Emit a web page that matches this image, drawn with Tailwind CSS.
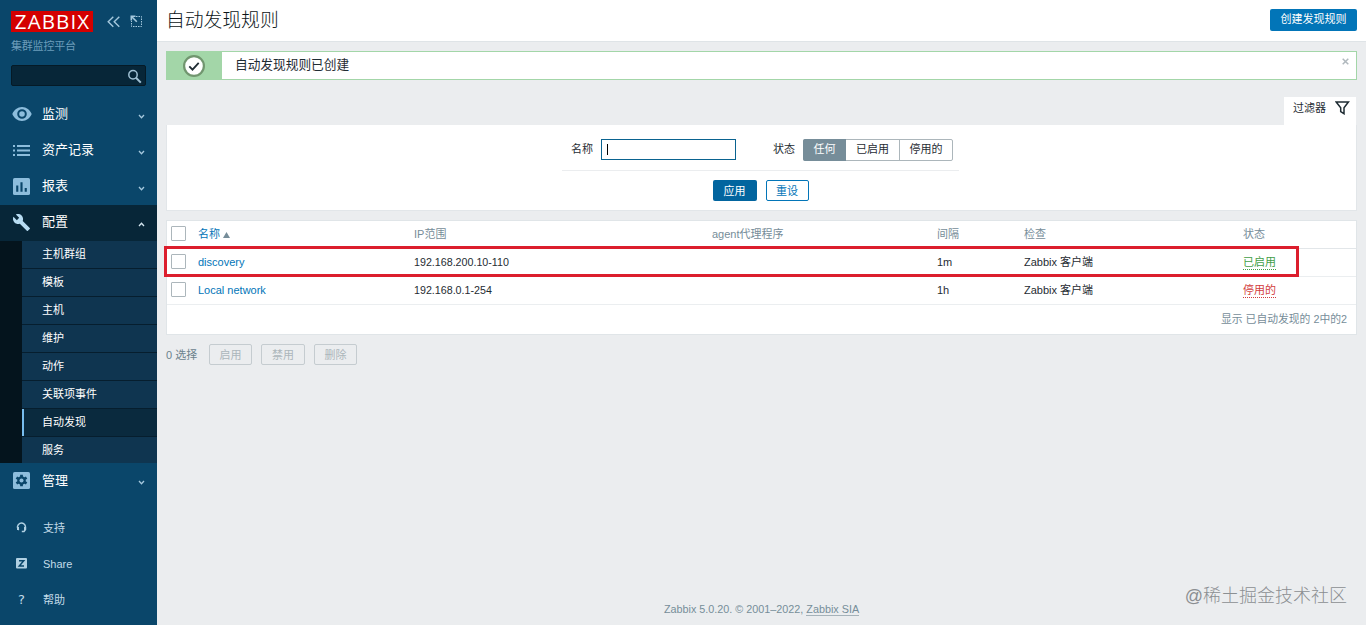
<!DOCTYPE html>
<html lang="zh">
<head>
<meta charset="utf-8">
<title>自动发现规则</title>
<script src="https://cdn.jsdelivr.net/npm/@tailwindcss/browser@4"></script>
</head>
<body class="relative flex h-[625px] w-[1366px] overflow-hidden bg-[#ebedef] font-['Liberation_Sans','Noto_Sans_CJK_SC',sans-serif] text-[11px] leading-[14px] text-[#1f2c33]">
<aside class="flex w-[157px] shrink-0 flex-col bg-[#0a466a] text-white">
  <div class="flex h-[43px] items-start pt-[11px] pl-[11px]">
    <div class="flex h-[21px] w-[82px] items-center justify-center bg-[#d40000] pl-px font-['Open_Sans',sans-serif] text-[20.5px] leading-none tracking-[1.1px]">ZABBIX</div>
    <svg class="mt-[5px] ml-[14px]" width="14" height="12" viewBox="0 0 14 12" fill="none" stroke="#a5c8dd" stroke-width="1.4"><path d="M6.3 .8 1.2 5.8l5.1 5M12.3 .8 7.2 5.8l5.1 5"/></svg>
    <svg class="mt-[4px] ml-[9px]" width="13" height="13" viewBox="0 0 13 13" fill="none" stroke="#a5c8dd"><path stroke-dasharray="1.5 1" d="M6 1.5h5.5v10h-10V6"/><path stroke-width="1.6" d="M1.300 5.500V1.300h4.200M1.800 1.800l5 5"/></svg>
  </div>
  <div class="h-[22px] pl-[11px] leading-[7px] tracking-[-0.2px] text-[#6d9dbb]">集群监控平台</div>
  <div class="ml-[11px] flex h-[21px] w-[135px] items-center justify-end rounded-[2px] border border-[#051a26] bg-[#072638] pt-px pr-[3px]">
    <svg width="15" height="15" viewBox="0 0 15 15" fill="none" stroke="#a0c0d3"><circle cx="6" cy="5.7" r="4.2" stroke-width="1.5"/><path stroke-width="2" d="m9 8.8 4.8 4.8"/></svg>
  </div>
  <nav class="mt-[10px] text-[13px]">
    <div class="flex h-9 items-center pl-[12px]">
      <svg width="20" height="16" viewBox="0 0 20 16" fill="#8dbddc"><path fill-rule="evenodd" d="M10 1C5.500 1 2 4 .3 8 2 12 5.500 15 10 15s8-3 9.700-7C18 4 14.500 1 10 1Zm0 2.200a4.800 4.800 0 1 1 0 9.600 4.800 4.800 0 0 1 0-9.600Zm0 2a2.800 2.800 0 1 0 0 5.600 2.800 2.800 0 0 0 0-5.600Z"/></svg>
      <span class="ml-[10px] grow">监测</span><svg class="mt-[4px] mr-[12px]" width="7" height="5" viewBox="0 0 7 5" fill="none" stroke="#a5c8dd" stroke-width="1.3"><path d="m1 1 2.500 2.700L6 1"/></svg>
    </div>
    <div class="flex h-9 items-center pl-[13px]">
      <svg width="17" height="11" viewBox="0 0 17 11" fill="#8dbddc"><path d="M0 0h2v2H0zM4 0h13v2H4zM0 4.500h2v2H0zM4 4.500h13v2H4zM0 9h2v2H0zM4 9h13v2H4z"/></svg>
      <span class="ml-[12px] grow">资产记录</span><svg class="mt-[4px] mr-[12px]" width="7" height="5" viewBox="0 0 7 5" fill="none" stroke="#a5c8dd" stroke-width="1.3"><path d="m1 1 2.500 2.700L6 1"/></svg>
    </div>
    <div class="flex h-9 items-center pl-[13px]">
      <svg width="17" height="17" viewBox="0 0 16 16"><rect width="16" height="16" rx="1.500" fill="#8dbddc"/><path fill="#0a466a" d="M3 7h2v6H3zM7 4h2v9H7zM11 9.500h2V13h-2z"/></svg>
      <span class="ml-[12px] grow">报表</span><svg class="mt-[4px] mr-[12px]" width="7" height="5" viewBox="0 0 7 5" fill="none" stroke="#a5c8dd" stroke-width="1.3"><path d="m1 1 2.500 2.700L6 1"/></svg>
    </div>
    <div class="mt-px flex h-9 items-center bg-[#072638] pb-[2px] pl-[13px]">
      <svg width="17" height="17" viewBox="1 1 22 22" fill="#b7dcf2"><path d="m22.700 19-9.100-9.100c.9-2.300.4-5-1.500-6.900-2-2-5-2.400-7.400-1.300L9 6 6 9 1.600 4.700C.4 7.100.9 10.100 2.900 12.100c1.900 1.900 4.600 2.400 6.900 1.500l9.100 9.100c.4.4 1 .4 1.400 0l2.300-2.300c.5-.4.5-1.100.1-1.400z"/></svg>
      <span class="ml-[12px] grow">配置</span><svg class="mt-[4px] mr-[12px]" width="7" height="5" viewBox="0 0 7 5" fill="none" stroke="#d4e6f0" stroke-width="1.3"><path d="m1 4 2.500-2.700L6 4"/></svg>
    </div>
    <div class="border-l-[22px] border-[#04141d] text-[11px]">
      <div class="h-7 border-b border-b-[#061e2e] bg-[#0f3550] pl-5 leading-[26px]">主机群组</div>
      <div class="h-7 border-b border-b-[#061e2e] bg-[#0f3550] pl-5 leading-[26px]">模板</div>
      <div class="h-7 border-b border-b-[#061e2e] bg-[#0f3550] pl-5 leading-[26px]">主机</div>
      <div class="h-7 border-b border-b-[#061e2e] bg-[#0f3550] pl-5 leading-[26px]">维护</div>
      <div class="h-7 border-b border-b-[#061e2e] bg-[#0f3550] pl-5 leading-[26px]">动作</div>
      <div class="h-7 border-b border-b-[#061e2e] bg-[#0f3550] pl-5 leading-[26px]">关联项事件</div>
      <div class="h-7 border-b border-b-[#061e2e] bg-[#0a2a3e]"><div class="h-[27px] border-l-2 border-[#78bdee] pl-[18px] leading-[26px]">自动发现</div></div>
      <div class="h-[26px] bg-[#0f3550] pl-5 leading-[26px]">服务</div>
    </div>
    <div class="flex h-9 items-center pb-px pl-[13px]">
      <svg width="17" height="17" viewBox="0 0 16 16"><rect width="16" height="16" rx="1.500" fill="#8dbddc"/><g stroke="#0a466a" stroke-width="2.600"><path d="M8 2.500v11M3.200 5.250l9.600 5.500M3.200 10.750l9.600-5.500"/></g><circle cx="8" cy="8" r="4" fill="#0a466a"/><circle cx="8" cy="8" r="1.900" fill="#8dbddc"/></svg>
      <span class="ml-[12px] grow">管理</span><svg class="mt-[4px] mr-[12px]" width="7" height="5" viewBox="0 0 7 5" fill="none" stroke="#a5c8dd" stroke-width="1.3"><path d="m1 1 2.500 2.700L6 1"/></svg>
    </div>
  </nav>
  <nav class="mt-[11px] text-[11px] text-[#c3dbe8]">
    <div class="flex h-9 items-center pl-[16px]"><svg class="-mt-[2px]" width="11" height="11" viewBox="0 0 11 11" fill="none" stroke="#b0d0e2" stroke-width="1.500"><path d="M2.800 8A4 4 0 1 1 9.500 5v2.500L8 9.500H5.800"/><path stroke-width="2" d="M2 5v3M9 5v3"/></svg><span class="ml-[16px]">支持</span></div>
    <div class="flex h-9 items-center pl-[16px]"><svg class="-mt-[2px]" width="11" height="11" viewBox="0 0 11 11"><rect width="11" height="10.500" rx="1" fill="#b0d0e2"/><path d="M3 2.800h4.700L3.300 7.900H8" fill="none" stroke="#0a466a" stroke-width="1.500"/></svg><span class="ml-[16px]">Share</span></div>
    <div class="flex h-9 items-center pl-[16px]"><span class="w-[11px] text-center font-['DejaVu_Sans',sans-serif] text-[13px]">?</span><span class="ml-[16px]">帮助</span></div>
  </nav>
</aside>
<main class="flex grow flex-col">
  <header class="flex h-[42px] items-start justify-between border-b border-[#dfe4e7] bg-white pr-[9px] pl-[9px]">
    <h1 class="pt-[9px] text-[18.8px] leading-[24px] font-light text-[#0c1418]">自动发现规则</h1>
    <button class="mt-[9px] h-[22px] w-[87px] rounded-[2px] bg-[#0275b8] pb-[2px] leading-[20px] text-white">创建发现规则</button>
  </header>
  <section class="mt-[9px] mr-[9px] ml-[9px] flex h-[29px] border border-[#a3d6a8] bg-white">
    <div class="flex w-[55px] items-center justify-center bg-[#a3d6a8] pr-px"><svg width="22" height="22" viewBox="0 0 22 22"><circle cx="11" cy="11" r="9.900" fill="#fff" stroke="#71966f" stroke-width="2.200"/><path d="m6.300 11.300 3.200 3.300 6.200-6.800" fill="none" stroke="#1f2c33" stroke-width="1.800"/></svg></div>
    <span class="grow pl-[13px] text-[12.7px] leading-[26px]">自动发现规则已创建</span>
    <svg class="mt-[6px] mr-[7px]" width="7" height="7" viewBox="0 0 7 7" stroke="#b0b8bd" stroke-width="1.500"><path d="m.7.7 5.600 5.600M6.300.7.7 6.300"/></svg>
  </section>
  <div class="mt-[17px] mr-[10px] flex h-[28px] justify-end"><div class="flex h-[28px] w-[72px] items-start bg-white pt-[4px] pl-[9px]"><span>过滤器</span><svg class="ml-[9px]" width="15" height="14" viewBox="0 0 15 14" fill="none" stroke="#1f2c33" stroke-width="1.500"><path d="M1.200 1h12.200L9 6.700v6L5.700 10.500V6.700Z"/></svg></div></div>
  <section class="mr-[9px] ml-[9px] flex h-[86px] flex-col items-center border border-t-0 border-[#e2e6e9] bg-white pr-[2px]">
    <div class="flex h-[46px] w-[397px] items-start border-b border-[#ebedef] pt-[14px] pl-[9px]">
      <span class="w-[30px] leading-[20px]">名称</span>
      <div class="h-[21px] w-[135px] border border-[#0a6390] pt-[4px] pl-[5px]"><div class="h-[11px] w-px bg-black"></div></div>
      <span class="ml-[37px] w-[30px] leading-[20px]">状态</span>
      <div class="flex h-[22px] w-[150px] rounded-[2px] border border-[#acb6bb] text-center leading-[19px]"><span class="-m-px w-[43px] rounded-l-[2px] bg-[#768d99] leading-[21px] text-white">任何</span><span class="ml-px w-[54px] border-r border-[#acb6bb]">已启用</span><span class="grow">停用的</span></div>
    </div>
    <div class="mt-[9px] flex gap-[9px]"><button class="h-[21px] w-[44px] rounded-[2px] bg-[#02659f] text-white">应用</button><button class="h-[21px] w-[43px] rounded-[2px] border border-[#0275b8] text-[#0275b8]">重设</button></div>
  </section>
  <section class="relative mt-[9px] mr-[9px] ml-[9px] h-[115px] border border-[#e0e5e8] bg-white">
    <div class="grid h-7 grid-cols-[31px_216px_298px_225px_87px_219px_1fr] items-center border-b border-[#e2e6e9] pb-[2px] text-[#768d99]">
      <i class="ml-[4px] size-[15px] rounded-[1px] border border-[#acb6bb]"></i><span class="flex items-center text-[#0275b8]">名称<svg class="mt-[2px] ml-[3px]" width="7" height="6"><path d="M3.500 0 7 6H0Z" fill="#768d99"/></svg></span><span>IP范围</span><span>agent代理程序</span><span>间隔</span><span>检查</span><span>状态</span>
    </div>
    <div class="grid h-7 grid-cols-[31px_216px_298px_225px_87px_219px_1fr] items-center border-b border-[#ebeef0] pb-[2px]">
      <i class="ml-[4px] size-[15px] rounded-[1px] border border-[#acb6bb]"></i><a class="text-[#0275b8]">discovery</a><span class="text-[10.7px]">192.168.200.10-110</span><span></span><span>1m</span><span>Zabbix 客户端</span><span class="pt-px"><a class="inline-block h-[14px] border-b border-dotted border-[#429e47] leading-[13px] text-[#429e47]">已启用</a></span>
    </div>
    <div class="grid h-7 grid-cols-[31px_216px_298px_225px_87px_219px_1fr] items-center border-b border-[#ebeef0] pb-[2px]">
      <i class="ml-[4px] size-[15px] rounded-[1px] border border-[#acb6bb]"></i><a class="text-[#0275b8]">Local network</a><span class="text-[10.7px]">192.168.0.1-254</span><span></span><span>1h</span><span>Zabbix 客户端</span><span class="pt-px"><a class="inline-block h-[14px] border-b border-dotted border-[#d23d3d] leading-[13px] text-[#d23d3d]">停用的</a></span>
    </div>
    <div class="pr-[9px] text-right text-[10.8px] leading-[28px] text-[#768d99]">显示 已自动发现的 2中的2</div>
    <div class="absolute top-[25px] -left-[3px] h-[31px] w-[1135px] border-3 border-[#dc1e2d]"></div>
  </section>
  <div class="mt-[9px] ml-[9px] flex h-[21px] items-center text-[#6c828d]"><span class="w-[43px]">0 选择</span><div class="flex gap-[9px] text-[#acb6bb]"><button class="h-[21px] w-[43px] rounded-[2px] border border-[#c5ccd0]">启用</button><button class="h-[21px] w-[44px] rounded-[2px] border border-[#c5ccd0]">禁用</button><button class="h-[21px] w-[43px] rounded-[2px] border border-[#c5ccd0]">删除</button></div></div>
  <footer class="mt-auto mb-[9px] text-center text-[10.8px] text-[#768d99]"><span>Zabbix 5.0.20. © 2001–2022, <a class="border-b border-[#a5b2b9]">Zabbix SIA</a></span></footer>
</main>
<div class="absolute top-[584px] right-[19px] text-[18px] leading-[24px] font-light text-[#8b8f92]">@稀土掘金技术社区</div>
</body>
</html>
